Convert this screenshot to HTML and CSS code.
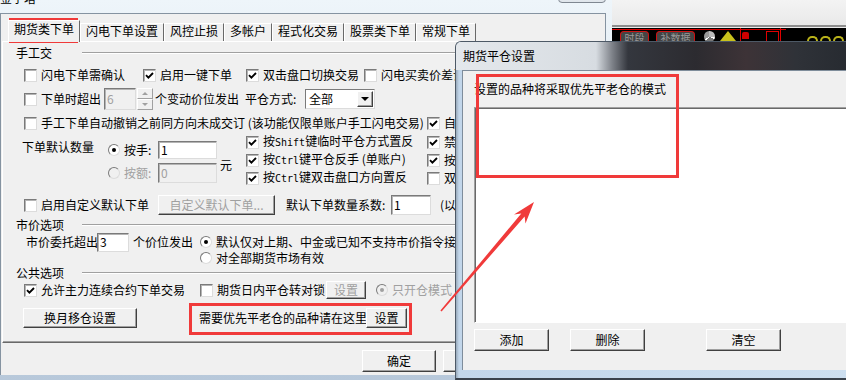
FILE: index.html
```html
<!DOCTYPE html>
<html lang="zh-CN">
<head>
    <meta charset="UTF-8">
    <title>期货平仓设置</title>
    <link rel="stylesheet" href="styles.css">
</head>
<body>
    <svg class="defs" width="0" height="0">
        <symbol id="tick" viewBox="0 0 9 9"><path d="M1 4.2 3.4 6.6 8 2" fill="none" stroke="#000" stroke-width="1.9"/></symbol>
    </svg>

    <!-- window behind, top right -->
    <div class="bgwin">
        <div class="bgwin-top"></div>
        <div class="toolbar">
            <span class="tb-btn">时段</span>
            <span class="tb-btn wide">补数据</span>
            <span class="tb-pie"></span>
            <span class="tb-warn"></span>
            <span class="tb-box"><i class="tb-man"></i><i class="tb-door"></i></span>
            <span class="tb-arcs"><i></i><i></i><i></i></span>
        </div>
    </div>

    <!-- main settings dialog -->
    <div class="main-win">
        <div class="caption">
            <span class="cap-title">金字塔</span>
            <span class="cap-close"></span>
        </div>
        <div class="client">
            <div class="tabs">
                <span class="tab active">期货类下单</span>
                <span class="tab">闪电下单设置</span>
                <span class="tab">风控止损</span>
                <span class="tab">多帐户</span>
                <span class="tab">程式化交易</span>
                <span class="tab">股票类下单</span>
                <span class="tab">常规下单</span>
            </div>
            <div class="panel">
                <div class="grp g1"><span>手工交</span><i></i></div>
                <div class="row r1">
                    <span class="cb"><i class="box"></i>闪电下单需确认</span>
                    <span class="cb"><i class="box"><svg><use href="#tick"/></svg></i>启用一键下单</span>
                    <span class="cb"><i class="box"><svg><use href="#tick"/></svg></i>双击盘口切换交易</span>
                    <span class="cb"><i class="box"></i>闪电买卖价差设置</span>
                </div>
                <div class="row r2">
                    <span class="cb"><i class="box"></i>下单时超出</span>
                    <span class="edit dis spin-edit">6</span>
                    <span class="spin"><i class="up"></i><i class="down"></i></span>
                    <span class="lbl steps">个变动价位发出</span>
                    <span class="lbl close-mode">平仓方式:</span>
                    <span class="combo"><span>全部</span><b></b></span>
                </div>
                <div class="row r3">
                    <span class="cb long"><i class="box"></i><span class="clip">手工下单自动撤销之前同方向未成交订 (该功能仅限单账户手工闪电交易)</span></span>
                    <span class="cb"><i class="box"><svg><use href="#tick"/></svg></i>自动</span>
                </div>
                <div class="qty">
                    <span class="qty-label">下单默认数量</span>
                    <div class="qty-opts">
                        <div class="opt"><span class="rb"><i class="dot on"></i>按手:</span><span class="edit">1</span></div>
                        <div class="opt dis"><span class="rb"><i class="dot"></i>按额:</span><span class="edit dis">0</span></div>
                    </div>
                    <span class="yuan">元</span>
                    <div class="col mid">
                        <span class="cb"><i class="box"><svg><use href="#tick"/></svg></i><span>按<span class="en">Shift</span>键临时平仓方式置反</span></span>
                        <span class="cb"><i class="box"><svg><use href="#tick"/></svg></i><span>按<span class="en">Ctrl</span>键平仓反手 (单账户)</span></span>
                        <span class="cb"><i class="box"><svg><use href="#tick"/></svg></i><span>按<span class="en">Ctrl</span>键双击盘口方向置反</span></span>
                    </div>
                    <div class="col">
                        <span class="cb"><i class="box"><svg><use href="#tick"/></svg></i>禁止</span>
                        <span class="cb"><i class="box"><svg><use href="#tick"/></svg></i>按键</span>
                        <span class="cb"><i class="box"></i>双击</span>
                    </div>
                </div>
                <div class="row r-custom">
                    <span class="cb"><i class="box"></i>启用自定义默认下单</span>
                    <button class="btn dis custom">自定义默认下单...</button>
                    <span class="lbl factor">默认下单数量系数:</span>
                    <span class="edit factor-edit">1</span>
                    <span class="lbl unit">(以手为单位)</span>
                </div>
                <div class="grp g2"><span>市价选项</span><i></i></div>
                <div class="row r-mkt">
                    <span class="lbl mkt-label">市价委托超出</span>
                    <span class="edit mkt-edit">3</span>
                    <span class="lbl ticks">个价位发出</span>
                    <span class="rb"><i class="dot on"></i>默认仅对上期、中金或已知不支持市价指令接收的交易所有效</span>
                </div>
                <div class="row r-mkt2">
                    <span class="rb"><i class="dot"></i>对全部期货市场有效</span>
                </div>
                <div class="grp g3"><span>公共选项</span><i></i></div>
                <div class="row r-pub">
                    <span class="cb main-cont"><i class="box"><svg><use href="#tick"/></svg></i>允许主力连续合约下单交易</span>
                    <span class="cb lock"><i class="box"></i>期货日内平仓转对锁</span>
                    <button class="btn dis lock-set">设置</button>
                    <span class="rb dis open-only"><i class="dot on"></i>只开仓模式</span>
                </div>
                <div class="row r-pub2">
                    <button class="btn roll">换月移仓设置</button>
                    <span class="lbl note">需要优先平老仓的品种请在这里</span>
                    <button class="btn note-set">设置</button>
                </div>
            </div>
            <div class="footer">
                <button class="btn ok">确定</button>
                <button class="btn ok">取消</button>
            </div>
        </div>
    </div>

    <!-- close-old-first dialog -->
    <div class="sub-win">
        <div class="sub-caption">期货平仓设置</div>
        <div class="sub-client">
            <div class="sub-label">设置的品种将采取优先平老仓的模式</div>
            <div class="listbox"></div>
            <div class="sub-btns">
                <button class="btn">添加</button>
                <button class="btn">删除</button>
                <button class="btn">清空</button>
            </div>
        </div>
    </div>

    <!-- red annotations -->
    <div class="mark mark-tab"></div>
    <div class="mark mark-note"></div>
    <div class="mark mark-label"></div>
    <svg class="arrow" width="846" height="380" viewBox="0 0 846 380">
        <polygon points="441.6,311.5 524.6,216.4 525.5,223.6 534,202 514,214.6 521.3,213.5 440.4,310.5" fill="#f03a3a"/>
    </svg>
</body>
</html>
```

FILE: styles.css
```css
* {
    box-sizing: border-box;
}
body {
    margin: 0;
    width: 846px;
    height: 380px;
    overflow: hidden;
    position: relative;
    background: #38414d;
    font: 12px/14px "Noto Sans CJK SC", "Liberation Sans", sans-serif;
    color: #000;
}
.defs {
    position: absolute;
}

/* window behind */
.bgwin {
    position: absolute;
    left: 612px;
    top: 0;
    width: 234px;
    height: 41px;
    background: #ececec;
}
.bgwin-top {
    height: 27px;
    border-bottom: 2px solid #8e8e8e;
    background: linear-gradient(#f3f3f3, #e9e9e9);
}
.toolbar {
    display: flex;
    align-items: flex-start;
    height: 13px;
    margin-top: 1px;
    background: #000 linear-gradient(#e00000, #e00000) 0 1px / 174px 1px no-repeat;
}
.tb-btn {
    width: 30px;
    height: 11px;
    margin: 3px 0 0 8px;
    border: 1px solid #d01010;
    border-bottom: 0;
    border-radius: 4px 4px 0 0;
    background: #444;
    color: #9a9a9a;
    font-size: 10px;
    line-height: 11px;
    text-align: center;
}
.tb-btn.wide {
    width: 41px;
    margin-left: 7px;
}
.tb-pie {
    width: 11px;
    height: 11px;
    margin: 3px 0 0 9px;
    border-radius: 50%;
    background: conic-gradient(#bbb 0 28%, #fff 28% 33%, #777 33% 62%, #fff 62% 67%, #999 67%);
}
.tb-warn {
    width: 0;
    margin: 3px 0 0 5px;
    border-left: 8px solid transparent;
    border-right: 8px solid transparent;
    border-bottom: 10px solid #c9c21c;
}
.tb-box {
    display: flex;
    width: 43px;
    height: 13px;
    margin-left: 4px;
    border-left: 1px solid #e00000;
    border-right: 1px solid #e00000;
}
.tb-man {
    width: 7px;
    height: 7px;
    margin: 4px 0 0 1px;
    background: #d00000;
    border-radius: 2px 2px 0 0;
}
.tb-door {
    width: 13px;
    height: 10px;
    margin: 3px 0 0 17px;
    border: 1px solid #e00000;
    border-bottom: 0;
}
.tb-arcs {
    display: flex;
    margin: 8px 0 0 26px;
}
.tb-arcs i {
    width: 11px;
    height: 5px;
    margin-right: 2px;
    border: 2px solid #b9b21a;
    border-bottom: 0;
    border-radius: 6px 6px 0 0;
}

/* main dialog */
.main-win {
    position: absolute;
    left: 0;
    top: 0;
    width: 612px;
    height: 380px;
    padding-right: 6px;
    background: linear-gradient(#eef5fa, #dbe6ef 40%, #b7c8da);
}
.caption {
    display: flex;
    height: 13px;
}
.cap-title {
    margin-top: -10px;
    line-height: 16px;
}
.cap-close {
    width: 48px;
    height: 18px;
    margin: -15px 0 0 auto;
    border: 1px solid #7f8791;
    border-radius: 0 0 4px 4px;
    background: linear-gradient(#f6f8fa, #dfe5eb);
}
.client {
    height: 362px;
    background: #f0f0f0;
    border: 1px solid #8593a1;
    border-bottom: 0;
}
.tabs {
    display: flex;
    align-items: flex-end;
    height: 27px;
    padding-left: 7px;
}
.tab {
    height: 18px;
    padding: 0 5px;
    border: 1px solid;
    border-color: #fff #696969 transparent #fff;
    border-bottom: 0;
    line-height: 14px;
    white-space: nowrap;
}
.tab.active {
    position: relative;
    z-index: 1;
    height: 22px;
    margin-bottom: -1px;
    line-height: 16px;
    background: #f0f0f0;
}
.panel {
    width: 601px;
    height: 302px;
    margin-left: 1px;
    padding-left: 13px;
    border: 1px solid;
    border-color: #fff #696969 #696969 #fff;
    box-shadow: inset -1px -1px #a0a0a0;
}
.footer {
    display: flex;
    gap: 7px;
    padding: 7px 0 0 361px;
}
.ok {
    width: 74px;
    height: 22px;
}

/* group headers */
.grp {
    display: flex;
    align-items: center;
    height: 14px;
}
.grp span {
    width: 66px;
}
.grp i {
    flex: 1;
    border-top: 1px solid #a0a0a0;
    border-bottom: 1px solid #fff;
}
.g1 {
    margin-top: 4px;
}
.g2 {
    margin-top: 3px;
}
.g3 {
    margin-top: 1px;
}

/* controls */
.row {
    display: flex;
    align-items: center;
    height: 18px;
}
.lbl {
    flex: none;
    white-space: nowrap;
}
.cb, .rb {
    display: inline-flex;
    align-items: center;
    flex: none;
    white-space: nowrap;
}
.box {
    display: flex;
    align-items: center;
    justify-content: center;
    flex: none;
    width: 13px;
    height: 13px;
    margin-right: 4px;
    background: #fff;
    border: 1px solid;
    border-color: #7a7a7a #dcdcdc #dcdcdc #7a7a7a;
    box-shadow: inset 1px 1px #b4b4b4;
}
.box svg {
    width: 9px;
    height: 9px;
}
.dot {
    display: flex;
    align-items: center;
    justify-content: center;
    flex: none;
    width: 12px;
    height: 12px;
    margin-right: 4px;
    border-radius: 50%;
    background: #fff;
    border: 1px solid;
    border-color: #7a7a7a #dcdcdc #dcdcdc #7a7a7a;
}
.dot.on::after {
    content: "";
    width: 4px;
    height: 4px;
    border-radius: 50%;
    background: #000;
}
.dis {
    color: #a0a0a0;
}
.dis .dot {
    background: #f0f0f0;
}
.dis .dot.on::after {
    background: #a0a0a0;
}
.en {
    font-family: "DejaVu Sans Mono", "Liberation Mono", monospace;
    font-size: 10px;
}
.edit {
    display: flex;
    align-items: center;
    flex: none;
    height: 18px;
    padding-left: 2px;
    background: #fff;
    border: 1px solid;
    border-color: #7a7a7a #dcdcdc #dcdcdc #7a7a7a;
    box-shadow: inset 1px 1px #b4b4b4;
}
.edit.dis {
    background: #f0f0f0;
}
.btn {
    flex: none;
    padding: 0;
    font: inherit;
    color: #000;
    background: #f0f0f0;
    border: 1px solid;
    border-color: #fff #404040 #404040 #fff;
    box-shadow: inset -1px -1px #a0a0a0;
}
.btn.dis {
    color: #a0a0a0;
}

/* row 1 */
.r1 {
    margin-top: 6px;
    padding-left: 8px;
}
.r1 .cb:nth-child(1) {
    width: 119px;
}
.r1 .cb:nth-child(2) {
    width: 103px;
}
.r1 .cb:nth-child(3) {
    width: 118px;
}

/* row 2 */
.r2 {
    height: 22px;
    margin-top: 4px;
    padding-left: 8px;
}
.r2 .cb {
    width: 80px;
}
.spin-edit {
    width: 32px;
    height: 22px;
}
.spin {
    display: flex;
    flex-direction: column;
    width: 16px;
    height: 22px;
    margin-left: 1px;
}
.spin i {
    display: flex;
    align-items: center;
    justify-content: center;
    flex: 1;
    background: #f0f0f0;
    border: 1px solid;
    border-color: #fff #a0a0a0 #a0a0a0 #fff;
}
.spin .up::after {
    content: "";
    border: 3px solid transparent;
    border-top: 0;
    border-bottom: 3px solid #a0a0a0;
}
.spin .down::after {
    content: "";
    border: 3px solid transparent;
    border-bottom: 0;
    border-top: 3px solid #a0a0a0;
}
.steps {
    width: 90px;
    margin-left: 2px;
}
.close-mode {
    width: 60px;
}
.combo {
    display: flex;
    align-items: center;
    width: 70px;
    height: 20px;
    padding: 1px;
    background: #fff;
    border: 1px solid;
    border-color: #7a7a7a #dcdcdc #dcdcdc #7a7a7a;
}
.combo span {
    flex: 1;
    padding-left: 2px;
}
.combo b {
    display: flex;
    align-items: center;
    justify-content: center;
    width: 16px;
    height: 16px;
    background: #f0f0f0;
    border: 1px solid;
    border-color: #fff #404040 #404040 #fff;
    box-shadow: inset -1px -1px #a0a0a0;
}
.combo b::after {
    content: "";
    border: 4px solid transparent;
    border-bottom: 0;
    border-top: 4px solid #000;
}

/* row 3 */
.r3 {
    margin-top: 4px;
    padding-left: 8px;
}
.long {
    width: 403px;
}
.clip {
    width: 386px;
}

/* default quantity block */
.qty {
    display: flex;
    height: 54px;
    margin-top: 1px;
}
.qty-label {
    width: 86px;
    margin: 7px 0 0 6px;
}
.qty-opts {
    display: flex;
    flex-direction: column;
    gap: 4px;
    width: 109px;
    margin-top: 8px;
}
.opt {
    display: flex;
    align-items: center;
}
.opt .rb {
    width: 50px;
}
.opt .edit {
    width: 59px;
}
.opt.dis .edit {
    height: 20px;
}
.yuan {
    width: 26px;
    margin: 25px 0 0 3px;
}
.col {
    display: flex;
    flex-direction: column;
}
.col .cb {
    height: 18px;
}
.col.mid {
    width: 181px;
}

/* custom default row */
.r-custom {
    height: 20px;
    margin-top: 8px;
    padding-left: 8px;
}
.r-custom .cb {
    width: 134px;
}
.custom {
    width: 117px;
    height: 20px;
}
.factor {
    width: 105px;
    margin-left: 11px;
}
.factor-edit {
    width: 40px;
    height: 20px;
}
.unit {
    margin-left: 9px;
}

/* market price rows */
.r-mkt {
    margin-top: 1px;
}
.mkt-label {
    width: 71px;
    margin-left: 10px;
}
.mkt-edit {
    width: 32px;
    height: 19px;
}
.ticks {
    width: 67px;
    margin-left: 4px;
}
.r-mkt2 {
    height: 14px;
    padding-left: 184px;
}

/* common rows */
.r-pub {
    margin-top: 1px;
    padding-left: 8px;
}
.main-cont {
    width: 176px;
}
.lock {
    width: 126px;
}
.lock-set {
    width: 40px;
    height: 18px;
}
.open-only {
    margin-left: 10px;
}
.r-pub2 {
    height: 20px;
    margin-top: 9px;
    padding-left: 7px;
}
.roll {
    width: 114px;
    height: 20px;
}
.note {
    width: 167px;
    margin-left: 62px;
}
.note-set {
    width: 41px;
    height: 20px;
}

/* second dialog */
.sub-win {
    position: absolute;
    left: 455px;
    top: 41px;
    width: 400px;
    height: 339px;
    overflow: hidden;
    border-left: 1px solid #4d5966;
    border-top: 1px solid #4d5966;
    border-bottom: 2px solid #3a424c;
    border-radius: 6px 0 0 0;
    background: linear-gradient(to right, #98a9ba, #c2d6ea 3px, #cddff0);
}
.sub-caption {
    height: 28px;
    padding-left: 7px;
    line-height: 28px;
    background: linear-gradient(to right, #e4e8ec, #d7dce1 140px, #7f838a 156px, #34373e 172px, #2c2b30 240px, #3d3337 290px, #2f3238 340px, #262a30);
}
.sub-client {
    height: 300px;
    margin-left: 6px;
    padding: 11px 0 0 11px;
    background: #f0f0f0;
    border-top: 1px solid #7f8d9b;
    border-left: 1px solid #7f8d9b;
}
.listbox {
    height: 216px;
    margin-top: 11px;
    background: #fff;
    border: 1px solid;
    border-color: #a0a0a0 #fff #fff #a0a0a0;
    box-shadow: inset 1px 1px #696969;
}
.sub-btns {
    display: flex;
    margin-top: 6px;
}
.sub-btns .btn {
    width: 75px;
    height: 22px;
}
.sub-btns .btn + .btn {
    margin-left: 21px;
}
.sub-btns .btn:last-child {
    margin-left: 61px;
}

/* annotations */
.mark {
    position: absolute;
    border: 3px solid #f03a3a;
}
.mark-tab {
    left: 9px;
    top: 18px;
    width: 69px;
    height: 25px;
}
.mark-note {
    left: 189px;
    top: 303px;
    width: 223px;
    height: 32px;
}
.mark-label {
    left: 476px;
    top: 74px;
    width: 203px;
    height: 104px;
}
.arrow {
    position: absolute;
    left: 0;
    top: 0;
    pointer-events: none;
}
```
